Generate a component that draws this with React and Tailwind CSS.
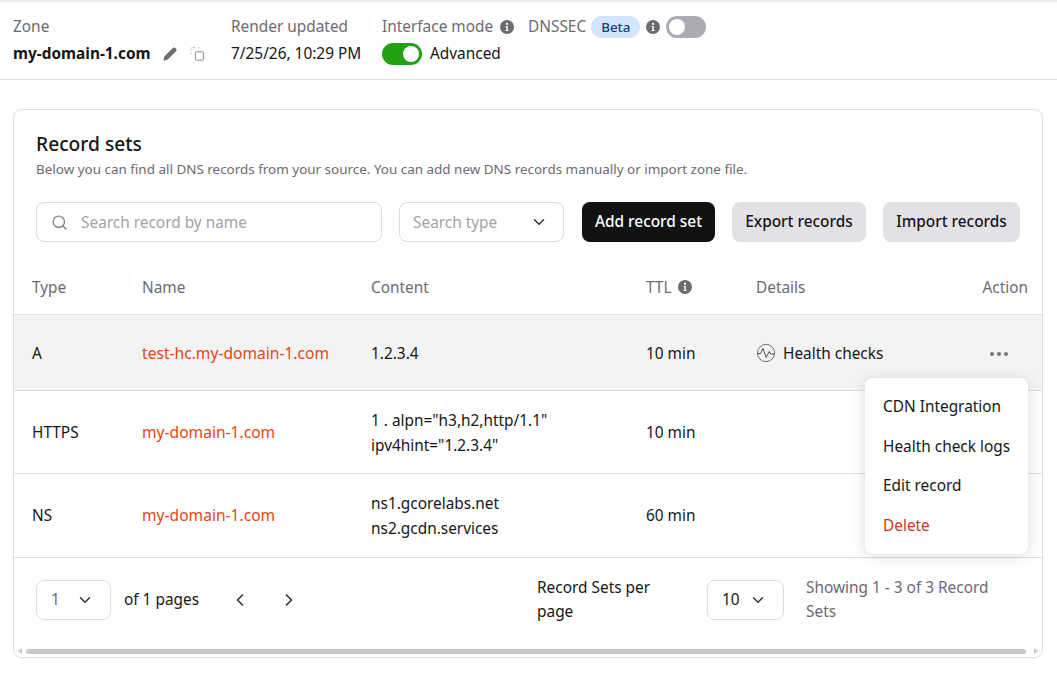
import React from "react";
import { Search, ChevronDown, ChevronLeft, ChevronRight, Pencil } from "lucide-react";

const font = { fontFamily: '"Noto Sans", sans-serif' };

function Info({ className = "" }) {
  return (
    <svg width="14" height="14" viewBox="0 0 14 14" className={className}>
      <circle cx="7" cy="7" r="7" fill="#6e6a72" />
      <circle cx="7" cy="3.9" r="1.1" fill="#fff" />
      <path d="M5.6 6h2.2v4.1h.8v1H5.5v-1h.9V7h-.8z" fill="#fff" />
    </svg>
  );
}

function Copy() {
  return (
    <svg width="16" height="16" viewBox="0 0 16 16" fill="none">
      <path d="M6 1.5H3.5A1.5 1.5 0 0 0 2 3v1.5M2 6.5v2M9 1.5h.5A1.5 1.5 0 0 1 11 3" stroke="#b5b2b8" strokeWidth="1" strokeDasharray="1.5 1" />
      <rect x="6.5" y="5.8" width="8" height="8.4" rx="1" stroke="#8f8b93" strokeWidth="1" />
    </svg>
  );
}

function Pulse() {
  return (
    <svg width="20" height="20" viewBox="0 0 20 20" fill="none">
      <circle cx="10" cy="10" r="8.6" stroke="#77737b" strokeWidth="1" />
      <path d="M1.8 10.5H4.5L7 5.5l3.2 9 3-6 1.5 2.5h3.6" stroke="#4e4b52" strokeWidth="1" strokeLinejoin="round" />
    </svg>
  );
}

function Toggle({ on }) {
  return (
    <div className={`flex h-[22px] w-10 items-center rounded-full p-[3px] ${on ? "justify-end bg-[#22a114]" : "justify-start bg-[#aeaab3]"}`}>
      <div className="h-4 w-4 rounded-full bg-white" />
    </div>
  );
}

function Row({ type, name, content, ttl, details, action, className = "" }) {
  return (
    <div className={`grid grid-cols-[110px_229px_275px_110px_1fr_auto] items-center pl-[18px] pr-[34px] text-[15.4px] text-[#161616] ${className}`}>
      <div>{type}</div>
      <div className="text-[15.6px] text-[#e8450f]">{name}</div>
      <div className="leading-[25px]">{content}</div>
      <div>{ttl}</div>
      <div>{details}</div>
      <div>{action}</div>
    </div>
  );
}

export default function App() {
  return (
    <div className="h-[674px] w-[1057px] overflow-hidden bg-white" style={font}>
      <div className="flex h-20 items-start gap-6 border-t-2 border-b border-t-[#ececec] border-b-[#dfdfdf] pl-[13px] pt-[13px] text-[15.4px]">
        <div className="w-[194px] shrink-0">
          <div className="leading-6 text-[#6e6a72]">Zone</div>
          <div className="mt-[3px] flex items-center leading-6">
            <span className="font-bold text-[#161616]">my-domain-1.com</span>
            <Pencil size={14} fill="#6e6a72" stroke="#6e6a72" className="ml-[12px]" />
            <span className="ml-[12px]"><Copy /></span>
          </div>
        </div>
        <div className="w-[127px] shrink-0 whitespace-nowrap">
          <div className="leading-6 text-[#6e6a72]">Render updated</div>
          <div className="mt-[3px] leading-6 text-[#161616]">7/25/26, 10:29 PM</div>
        </div>
        <div className="w-[122px] shrink-0">
          <div className="flex items-center gap-[7px] leading-6 text-[#6e6a72] whitespace-nowrap">
            Interface mode <Info className="shrink-0" />
          </div>
          <div className="mt-[2px] flex items-center gap-2 leading-6 text-[#161616]">
            <Toggle on />
            <span className="pt-[1px]">Advanced</span>
          </div>
        </div>
        <div className="flex items-center leading-6 text-[#6e6a72]">
          DNSSEC
          <span className="ml-[5px] rounded-full bg-[#d3e5fb] px-[10px] text-[13.4px] leading-[22px] font-medium text-[#173f77]">Beta</span>
          <Info className="ml-[6px]" />
          <span className="ml-[6px]"><Toggle /></span>
        </div>
      </div>

      <div className="relative mx-[13px] mt-[29px] h-[549px] w-[1030px] rounded-lg border border-[#dfdfdf]">
        <div className="px-[22px] pt-5">
          <h2 className="text-[19.2px] leading-7 font-medium text-[#161616]">Record sets</h2>
          <p className="mt-[1px] text-[13.45px] leading-5 text-[#6e6a72]">Below you can find all DNS records from your source. You can add new DNS records manually or import zone file.</p>
          <div className="mt-[23px] flex items-center text-[15.4px]">
            <div className="flex h-10 w-[346px] items-center rounded-lg border border-[#dcdcdc] pl-[14px] text-[#a5a1a8]">
              <Search size={17} className="text-[#88848c]" />
              <span className="ml-[13px] pt-[1px]">Search record by name</span>
            </div>
            <div className="ml-[17px] flex h-10 w-[165px] items-center justify-between rounded-lg border border-[#dcdcdc] pl-[13px] pr-[15px] text-[#a5a1a8]">
              <span className="pt-[1px]">Search type</span>
              <ChevronDown size={18} className="text-[#333]" />
            </div>
            <button className="ml-[18px] h-10 w-[133px] rounded-lg bg-[#111] font-medium text-white">Add record set</button>
            <button className="ml-[17px] h-10 w-[134px] rounded-lg bg-[#e3e1e6] font-medium text-[#161616]">Export records</button>
            <button className="ml-[17px] h-10 w-[137px] rounded-lg bg-[#e3e1e6] font-medium text-[#161616]">Import records</button>
          </div>
        </div>

        <div className="mt-[25px]">
          <Row
            className="h-[48px] border-b border-[#e6e6e6] pb-[6px] text-[#6e6a72]"
            type={<span className="text-[#6e6a72]">Type</span>}
            name={<span className="text-[15.4px] text-[#6e6a72]">Name</span>}
            content={<span className="text-[#6e6a72]">Content</span>}
            ttl={<span className="flex items-center gap-[6px] text-[#6e6a72]">TTL <Info /></span>}
            details={<span className="text-[#6e6a72]">Details</span>}
            action={<span className="relative left-[20px] text-[#6e6a72]">Action</span>}
          />
          <Row
            className="h-[76px] border-b border-[#dfdfdf] bg-[#f3f3f3] pt-[2px]"
            type="A"
            name="test-hc.my-domain-1.com"
            content="1.2.3.4"
            ttl="10 min"
            details={<span className="flex items-center gap-[7px]"><Pulse />Health checks</span>}
            action={
              <span className="flex gap-[3px]">
                <i className="h-1 w-1 rounded-full bg-[#77737b]" />
                <i className="h-1 w-1 rounded-full bg-[#77737b]" />
                <i className="h-1 w-1 rounded-full bg-[#77737b]" />
              </span>
            }
          />
          <Row
            className="h-[83px] border-b border-[#dfdfdf] pt-[1px]"
            type="HTTPS"
            name="my-domain-1.com"
            content={<>1 . alpn="h3,h2,http/1.1"<br />ipv4hint="1.2.3.4"</>}
            ttl="10 min"
          />
          <Row
            className="h-[84px] border-b border-[#dfdfdf]"
            type="NS"
            name="my-domain-1.com"
            content={<>ns1.gcorelabs.net<br />ns2.gcdn.services</>}
            ttl="60 min"
          />
        </div>

        <div className="flex h-[84px] items-center pl-[22px] text-[15.4px] text-[#161616]">
          <div className="flex h-10 w-[75px] items-center justify-between rounded-lg border border-[#dcdcdc] pl-[14px] pr-4">
            <span className="text-[#6e6a72]">1</span>
            <ChevronDown size={18} className="text-[#333]" />
          </div>
          <span className="ml-[13px] whitespace-nowrap">of 1 pages</span>
          <ChevronLeft size={20} className="ml-[31px] text-[#333]" />
          <ChevronRight size={20} className="ml-[29px] text-[#333]" />
          <div className="ml-[238px] w-[140px] leading-6">Record Sets per page</div>
          <div className="ml-[30px] flex h-10 w-[77px] items-center justify-between rounded-lg border border-[#dcdcdc] pl-[14px] pr-4 text-[#161616]">
            10
            <ChevronDown size={18} className="text-[#333]" />
          </div>
          <div className="ml-[22px] w-[200px] leading-6 text-[#6e6a72]">Showing 1 - 3 of 3 Record Sets</div>
        </div>

        <div className="flex h-[14px] items-center pl-[4px] pr-[4px] pt-[4px]">
          <span className="h-0 w-0 border-y-[3px] border-r-[4px] border-y-transparent border-r-[#c9c7cc]" />
          <div className="ml-[4px] mr-[8px] h-[5px] flex-1 rounded-full bg-[#c9c7cc]" />
          <span className="h-0 w-0 border-y-[3px] border-l-[4px] border-y-transparent border-l-[#c9c7cc]" />
        </div>

        <div className="absolute left-[851px] top-[268px] w-[163px] rounded-lg bg-white py-[9px] text-[15.4px] text-[#161616] shadow-[0_2px_14px_rgba(0,0,0,0.14)]">
          <div className="flex h-[39.5px] items-center pl-[18px]">CDN Integration</div>
          <div className="flex h-[39.5px] items-center pl-[18px]">Health check logs</div>
          <div className="flex h-[39.5px] items-center pl-[18px]">Edit record</div>
          <div className="flex h-[39.5px] items-center pl-[18px] text-[#d0342c]">Delete</div>
        </div>
      </div>
    </div>
  );
}
